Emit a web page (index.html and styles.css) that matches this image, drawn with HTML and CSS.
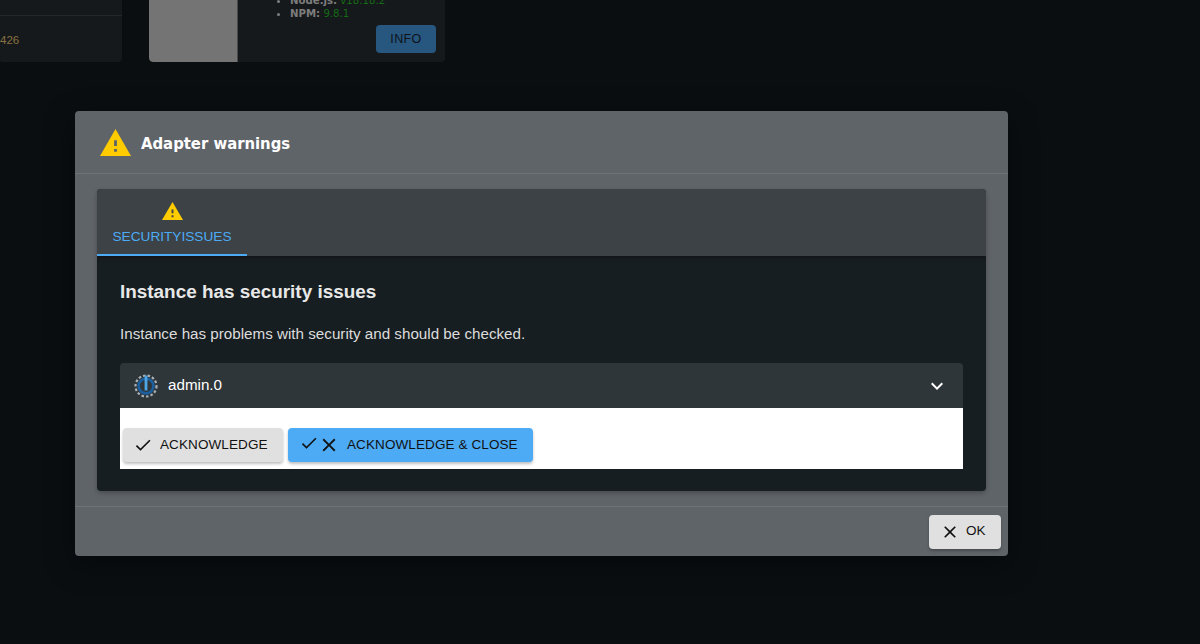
FILE: index.html
```html
<!DOCTYPE html>
<html lang="en">
<head>
<meta charset="utf-8">
<title>Adapter warnings</title>
<link rel="stylesheet" href="styles.css">
</head>
<body>
<div class="backdrop">
  <div class="card card-left">
    <div class="card-left-top"></div>
    <div class="card-left-row">426</div>
  </div>
  <div class="card card-right">
    <div class="card-image"></div>
    <div class="card-info">
      <ul class="card-list">
        <li><b>Node.js:</b> <span class="green">v18.18.2</span></li>
        <li><b>NPM:</b> <span class="green">9.8.1</span></li>
      </ul>
      <div class="card-actions"><span class="info-btn">INFO</span></div>
    </div>
  </div>
</div>

<section class="dialog">
  <header class="dialog-title">
    <svg class="warn-big" viewBox="1 2 22 19" preserveAspectRatio="none"><path fill="#ffcc00" d="M1 21h22L12 2 1 21z"/><path fill="#5f6468" d="M13 18h-2v-2h2v2zm0-4h-2v-4h2v4z"/></svg>
    <h2>Adapter warnings</h2>
  </header>
  <div class="dialog-body">
    <div class="panel">
      <div class="tabs">
        <div class="tab">
          <svg class="warn-small" viewBox="1 2 22 19" preserveAspectRatio="none"><path fill="#ffcc00" d="M1 21h22L12 2 1 21z"/><path fill="#3c4144" d="M13 18h-2v-2h2v2zm0-4h-2v-4h2v4z"/></svg>
          <span>SECURITYISSUES</span>
        </div>
      </div>
      <div class="panel-content">
        <h3>Instance has security issues</h3>
        <p>Instance has problems with security and should be checked.</p>
        <div class="accordion">
          <div class="summary">
            <svg class="admin-icon" viewBox="0 0 24 24">
              <circle cx="12" cy="12" r="10.5" fill="none" stroke="#a9b0b5" stroke-width="2.2" stroke-dasharray="2.6 2.01"/>
              <circle cx="12" cy="12" r="7.4" fill="none" stroke="#1b5f9e" stroke-width="2.6"/>
              <rect x="10.6" y="1.5" width="2.8" height="15" fill="#4ea6e6"/>
            </svg>
            <span class="summary-name">admin.0</span>
            <svg class="chevron" viewBox="0 0 24 24"><path fill="#fff" d="M16.59 8.59 12 13.17 7.41 8.59 6 10l6 6 6-6z"/></svg>
          </div>
          <div class="details">
            <button class="btn btn-grey btn-ack">
              <svg class="ico" viewBox="0 0 24 24"><path d="M9 16.17 4.83 12l-1.42 1.41L9 19 21 7l-1.41-1.41z"/></svg>
              <span class="btn-text">ACKNOWLEDGE</span>
            </button>
            <button class="btn btn-blue">
              <svg class="ico ico-up" viewBox="0 0 24 24"><path d="M9 16.17 4.83 12l-1.42 1.41L9 19 21 7l-1.41-1.41z"/></svg>
              <svg class="ico ico-close" viewBox="0 0 24 24"><path d="M19 6.41 17.59 5 12 10.59 6.41 5 5 6.41 10.59 12 5 17.59 6.41 19 12 13.41 17.59 19 19 17.59 13.41 12z"/></svg>
              <span class="btn-text">ACKNOWLEDGE &amp; CLOSE</span>
            </button>
          </div>
        </div>
      </div>
    </div>
  </div>
  <footer class="dialog-actions">
    <button class="btn btn-grey btn-ok">
      <svg class="ico" viewBox="0 0 24 24"><path d="M19 6.41 17.59 5 12 10.59 6.41 5 5 6.41 10.59 12 5 17.59 6.41 19 12 13.41 17.59 19 19 17.59 13.41 12z"/></svg>
      <span class="btn-text">OK</span>
    </button>
  </footer>
</section>
</body>
</html>
```

FILE: styles.css
```css
* { box-sizing: border-box; }
html, body { margin: 0; height: 644px; overflow: hidden; }
body {
  position: relative;
  background: #0a0e11;
  font-family: "Liberation Sans", Arial, sans-serif;
}

.backdrop { display: flex; gap: 27px; height: 62px; align-items: flex-end; margin-left: -1px; }
.card { background: #16191c; border-radius: 4px; height: 100px; flex: none; }
.card-left { width: 123px; display: flex; flex-direction: column; padding-top: 38px; }
.card-left-top { height: 16px; flex: none; border-bottom: 1px solid #23262a; }
.card-left-row { padding: 17px 0 0 1px; color: #8b7040; font-size: 11.5px; line-height: 14px; }

.card-right { width: 296px; display: flex; overflow: hidden; }
.card-image { width: 89px; background: #747474; border-right: 1px solid #4a4a4a; border-radius: 0 0 0 4px; flex: none; }
.card-info { flex: 1; padding-right: 9px; }
.card-list {
  margin: 32px 0 0; padding: 0 0 0 52px;
  font-family: "DejaVu Sans Condensed", "DejaVu Sans", sans-serif; font-stretch: condensed;
  font-size: 11.3px; line-height: 13px; color: #7d7d7d;
}
.card-list b { font-weight: 700; }
.green { color: #146b14; }
.card-actions { display: flex; justify-content: flex-end; margin-top: 5px; }
.info-btn {
  width: 60px; height: 28px; background: #27567f; border-radius: 4px;
  color: #0d1319; font-size: 12.5px; letter-spacing: .4px;
  display: flex; align-items: center; justify-content: center;
}

.dialog {
  position: absolute; left: 75px; top: 111px; width: 933px; height: 445px;
  background: #5f6468; border-radius: 4px;
  display: flex; flex-direction: column;
  box-shadow: 0 8px 30px rgba(0,0,0,.4);
}
.dialog-title {
  height: 63px; flex: none; display: flex; align-items: center; gap: 10px;
  padding: 0 0 0 25px; border-bottom: 1px solid #6f7376;
}
.dialog-title h2 {
  margin: 2px 0 0; font-family: "DejaVu Sans Condensed", "DejaVu Sans", sans-serif; font-stretch: condensed;
  font-weight: 700; font-size: 16.5px; color: #fff;
}
.warn-big { width: 31px; height: 27px; flex: none; }

.dialog-body { flex: 1; padding: 15px 22px; }
.panel {
  height: 302px; background: #171e21; border-radius: 4px; overflow: hidden;
  box-shadow: 0 2px 4px rgba(0,0,0,.25);
}
.tabs { height: 67px; background: #3c4245; box-shadow: 0 2px 4px rgba(0,0,0,.3); position: relative; }
.tab {
  width: 150px; height: 67px; border-bottom: 2px solid #4dabf5; color: #4dabf5;
  font-size: 13.65px; display: flex; flex-direction: column; align-items: center;
  padding-top: 13px; gap: 9px;
}
.warn-small { width: 21px; height: 18px; flex: none; }
.panel-content { padding: 24px 23px 0 23px; }
.panel-content h3 { margin: 0; font-size: 18.9px; line-height: 24px; font-weight: 700; color: #e8e8e8; }
.panel-content p { margin: 18px 0 0; font-size: 15.2px; line-height: 24px; color: #dcdcdc; }
.accordion { margin-top: 17px; border-radius: 4px 4px 0 0; overflow: hidden; }
.summary {
  height: 45px; background: #2f3639; display: flex; align-items: center;
  padding: 0 14px 0 14px; color: #fff; font-size: 15.2px;
}
.admin-icon { width: 24px; height: 24px; flex: none; }
.summary-name { margin: 0 0 2px 10px; flex: 1; }
.chevron { width: 24px; height: 24px; flex: none; }
.details { height: 61px; background: #fff; display: flex; align-items: flex-start; gap: 5px; padding: 20px 0 0 3px; }

.btn {
  height: 34px; border: 0; border-radius: 4px; display: inline-flex; align-items: center;
  font-family: inherit; font-size: 13.5px; letter-spacing: .1px; color: #111; white-space: nowrap;
  box-shadow: 0 2px 3px rgba(0,0,0,.25); padding: 0;
}
.btn-text { padding-bottom: 2px; }
.ico { width: 20px; height: 20px; flex: none; fill: #111; }
.btn-grey { background: #e0e0e0; width: 160px; padding-left: 11px; gap: 6px; }
.btn-ack { padding-left: 10px; gap: 7px; }
.btn-blue { background: #4dabf5; width: 245px; padding-left: 11px; }
.ico-up { margin-top: -4px; }
.ico-close { width: 22px; height: 22px; margin: 0 7px 0 -1px; }
.dialog-actions {
  height: 50px; flex: none; border-top: 1px solid #6f7376;
  display: flex; justify-content: flex-end; align-items: center; padding: 0 7px 0 0;
}
.btn-ok { width: 72px; height: 34px; }
```
